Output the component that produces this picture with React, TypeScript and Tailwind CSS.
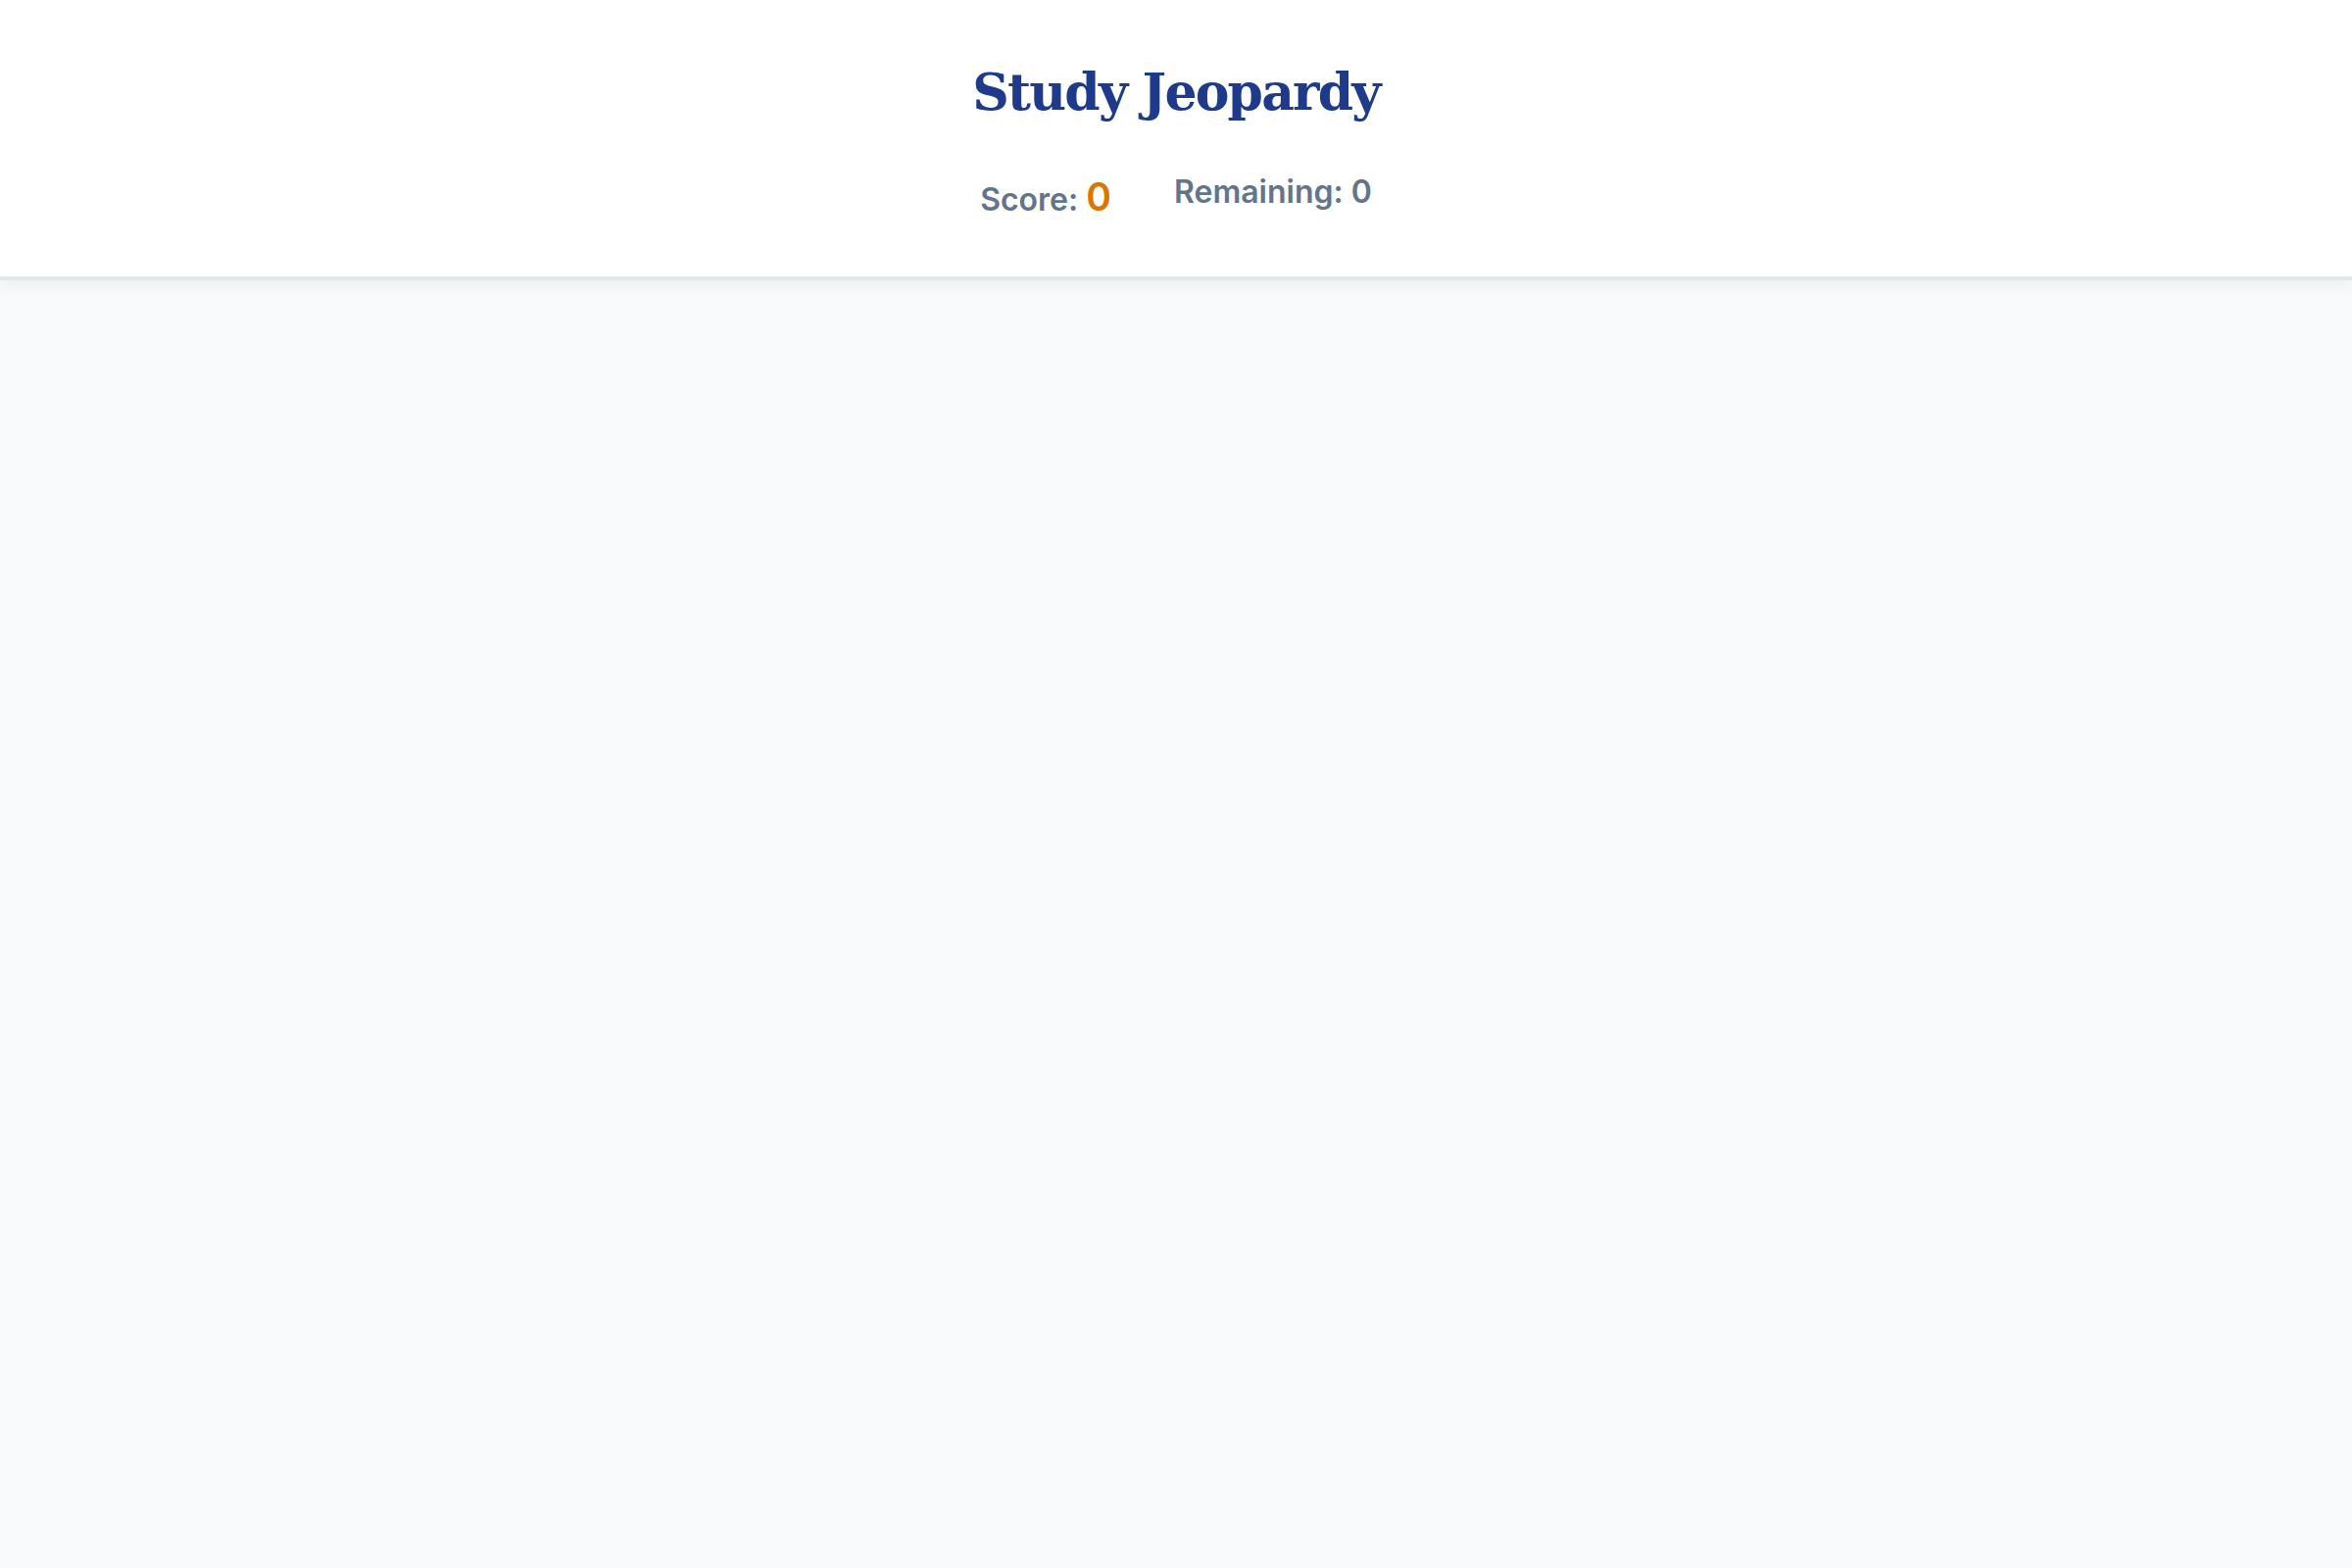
import React from "react";

export default function App() {
  return (
    <div className="min-h-[1600px] bg-[#f8fafc] font-['Inter','Noto_Sans',sans-serif]">
      <header className="h-[286px] bg-white border-b-4 border-[#e2e8f0] shadow-[0_6px_14px_rgba(15,23,42,0.05)] flex flex-col items-center pt-[58px]">
        <h1 className="font-['DejaVu_Serif','Liberation_Serif',serif] font-bold text-[52px] leading-[72px] tracking-[-1.8px] text-[#1e3a8a]">
          Study Jeopardy
        </h1>
        <div className="mt-[50px] flex items-center gap-[64px] text-[32px] font-semibold text-[#64748b]">
          <div className="flex items-baseline leading-none">
            <span>Score:&nbsp;</span>
            <span className="text-[39px] text-[#d97706]">0</span>
          </div>
          <div className="leading-none pb-[8px]">Remaining: 0</div>
        </div>
      </header>
    </div>
  );
}
